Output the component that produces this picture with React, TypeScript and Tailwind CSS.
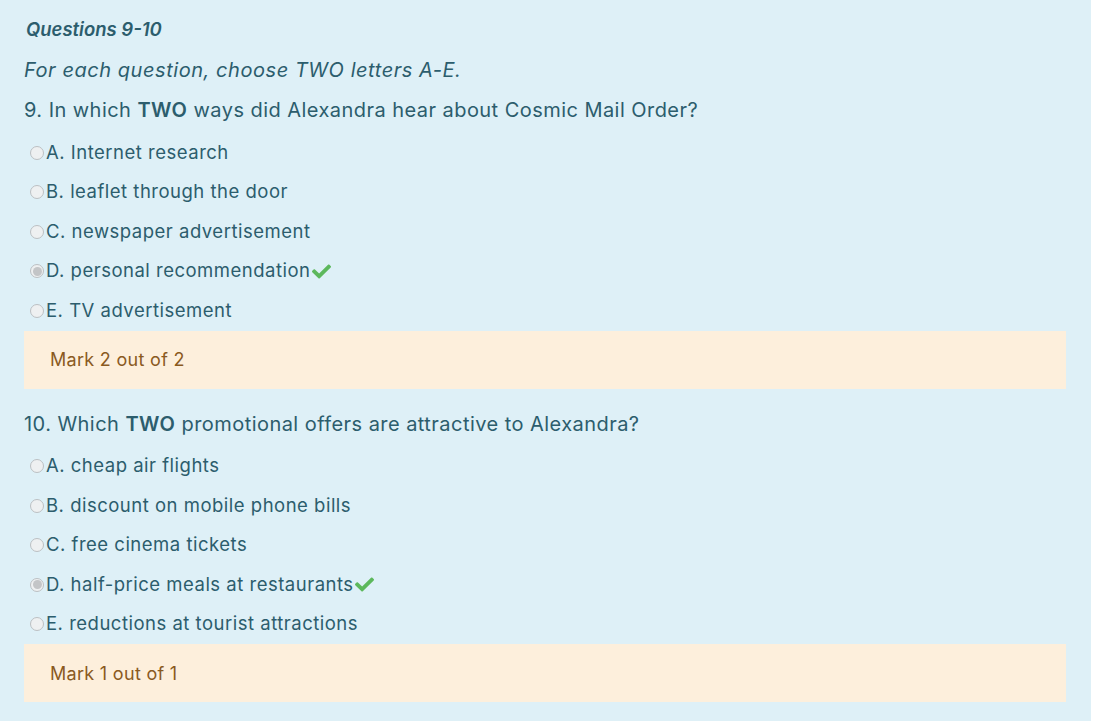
import React from "react";
import { FaCheck } from "react-icons/fa";

type Opt = { label: string; picked?: boolean };

const q9: Opt[] = [
  { label: "A. Internet research" },
  { label: "B. leaflet through the door" },
  { label: "C. newspaper advertisement" },
  { label: "D. personal recommendation", picked: true },
  { label: "E. TV advertisement" },
];

const q10: Opt[] = [
  { label: "A. cheap air flights" },
  { label: "B. discount on mobile phone bills" },
  { label: "C. free cinema tickets" },
  { label: "D. half-price meals at restaurants", picked: true },
  { label: "E. reductions at tourist attractions" },
];

const Radio = ({ on }: { on?: boolean }) => (
  <span className="ml-[6px] mr-[2px] flex h-[14px] w-[14px] shrink-0 items-center justify-center rounded-full border border-[#bcc0c3] bg-[#eef0f1]">
    {on && <span className="h-[9px] w-[9px] rounded-full bg-[#c3c5c7]" />}
  </span>
);

const Options = ({ items }: { items: Opt[] }) => (
  <div className="mt-[3px] text-[18.5px] tracking-[0.5px]">
    {items.map((o, i) => (
      <div key={i} className="flex h-[39.5px] items-center">
        <Radio on={o.picked} />
        <span>{o.label}</span>
        {o.picked && <FaCheck size={19} className="ml-[1px] text-[#5cb85c]" />}
      </div>
    ))}
  </div>
);

const Mark = ({ text }: { text: string }) => (
  <div className="flex h-[58px] items-center bg-[#fdefdc] px-[26px] text-[18px] tracking-[0.3px] text-[#8a5a1f]">
    {text}
  </div>
);

export default function App() {
  return (
    <div className="min-h-[721px] bg-white">
      <div
        className="min-h-[721px] w-[1091px] bg-[#def0f7] pl-6 pr-[25px] pt-[10px] text-[#2c5d6d]"
        style={{ fontFamily: "Inter, 'Noto Sans', sans-serif" }}
      >
        <div className="flex h-[40px] items-center pl-[2px] text-[18.5px] font-semibold italic">
          Questions 9-10
        </div>
        <div className="flex h-[40px] items-center text-[20px] italic tracking-[0.55px]">
          For each question, choose TWO letters A-E.
        </div>
        <div className="flex h-[40px] items-center text-[20px] tracking-[0.45px]">
          <span>
            9. In which <b className="font-semibold">TWO</b> ways did Alexandra hear about Cosmic Mail Order?
          </span>
        </div>
        <Options items={q9} />
        <Mark text="Mark 2 out of 2" />
        <div className="mt-[15px] flex h-[40px] items-center text-[20px] tracking-[0.45px]">
          <span>
            10. Which <b className="font-semibold">TWO</b> promotional offers are attractive to Alexandra?
          </span>
        </div>
        <Options items={q10} />
        <Mark text="Mark 1 out of 1" />
      </div>
    </div>
  );
}
